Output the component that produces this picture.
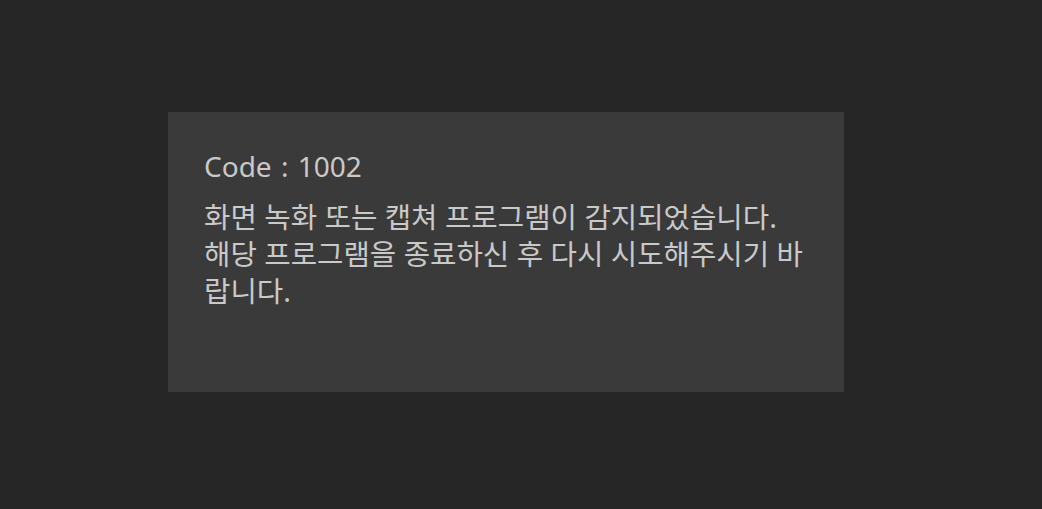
export default function App() {
  return (
    <div className="min-h-[509px] w-full bg-[#262626] pt-[112px] pl-[168px]">
      <div
        className="w-[676px] h-[280px] bg-[#3a3a3a] px-[36px] pt-[36px] text-[#c9c9c9]"
        style={{ fontFamily: '"Noto Sans", "Noto Sans CJK KR", sans-serif' }}
      >
        <p className="text-[28px] leading-[36px] [word-spacing:2px]">Code : 1002</p>
        <p className="mt-[14px] text-[28.7px] leading-[37px]">
          화면 녹화 또는 캡쳐 프로그램이 감지되었습니다.
          <br />
          해당 프로그램을 종료하신 후 다시 시도해주시기 바랍니다.
        </p>
      </div>
    </div>
  );
}
